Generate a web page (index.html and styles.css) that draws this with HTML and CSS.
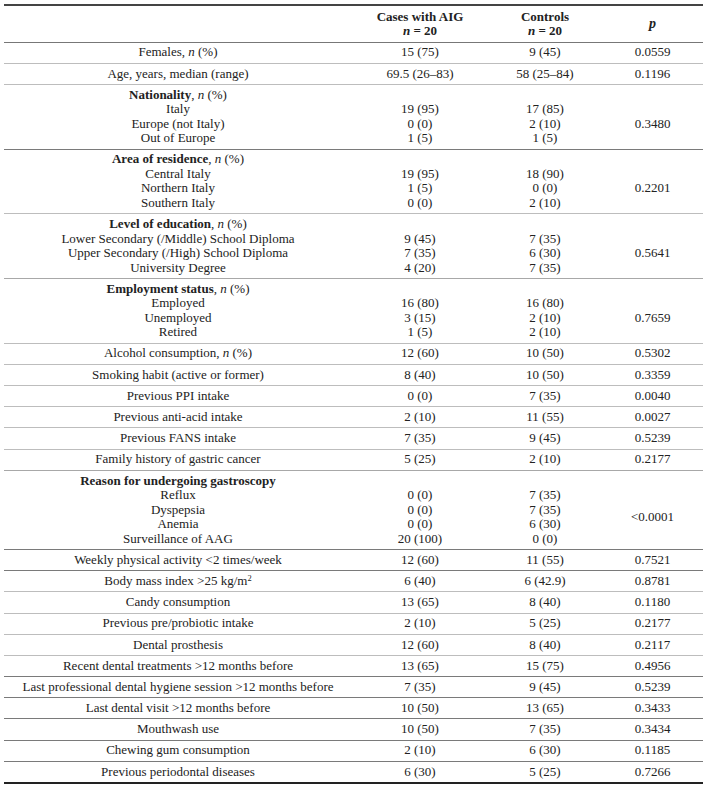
FILE: index.html
```html
<!DOCTYPE html>
<html>
<head>
<meta charset="utf-8">
<link rel="stylesheet" href="styles.css">
</head>
<body>
<table class="tbl">
  <colgroup>
    <col class="c1"><col class="c2"><col class="c3"><col class="c4">
  </colgroup>
  <thead>
    <tr>
      <th></th>
      <th>Cases with AIG<br><i>n</i> = 20</th>
      <th>Controls<br><i>n</i> = 20</th>
      <th><i class="pp">p</i></th>
    </tr>
  </thead>
  <tbody>
    <tr class="lt"><td>Females, <i>n</i> (%)</td><td>15 (75)</td><td>9 (45)</td><td>0.0559</td></tr>
    <tr class="lt"><td>Age, years, median (range)</td><td>69.5 (26–83)</td><td>58 (25–84)</td><td>0.1196</td></tr>
    <tr class="dk grp">
      <td><b>Nationality</b>, <i>n</i> (%)<br>Italy<br>Europe (not Italy)<br>Out of Europe</td>
      <td class="sub">19 (95)<br>0 (0)<br>1 (5)</td>
      <td class="sub">17 (85)<br>2 (10)<br>1 (5)</td>
      <td class="pv">0.3480</td>
    </tr>
    <tr class="lt grp">
      <td><b>Area of residence</b>, <i>n</i> (%)<br>Central Italy<br>Northern Italy<br>Southern Italy</td>
      <td class="sub">19 (95)<br>1 (5)<br>0 (0)</td>
      <td class="sub">18 (90)<br>0 (0)<br>2 (10)</td>
      <td class="pv">0.2201</td>
    </tr>
    <tr class="lt2 grp">
      <td><b>Level of education</b>, <i>n</i> (%)<br>Lower Secondary (/Middle) School Diploma<br>Upper Secondary (/High) School Diploma<br>University Degree</td>
      <td class="sub">9 (45)<br>7 (35)<br>4 (20)</td>
      <td class="sub">7 (35)<br>6 (30)<br>7 (35)</td>
      <td class="pv">0.5641</td>
    </tr>
    <tr class="lt grp">
      <td><b>Employment status</b>, <i>n</i> (%)<br>Employed<br>Unemployed<br>Retired</td>
      <td class="sub">16 (80)<br>3 (15)<br>1 (5)</td>
      <td class="sub">16 (80)<br>2 (10)<br>2 (10)</td>
      <td class="pv">0.7659</td>
    </tr>
    <tr class="lt"><td>Alcohol consumption, <i>n</i> (%)</td><td>12 (60)</td><td>10 (50)</td><td>0.5302</td></tr>
    <tr class="lt"><td>Smoking habit (active or former)</td><td>8 (40)</td><td>10 (50)</td><td>0.3359</td></tr>
    <tr class="lt"><td>Previous PPI intake</td><td>0 (0)</td><td>7 (35)</td><td>0.0040</td></tr>
    <tr class="lt"><td>Previous anti-acid intake</td><td>2 (10)</td><td>11 (55)</td><td>0.0027</td></tr>
    <tr class="lt"><td>Previous FANS intake</td><td>7 (35)</td><td>9 (45)</td><td>0.5239</td></tr>
    <tr class="lt2"><td>Family history of gastric cancer</td><td>5 (25)</td><td>2 (10)</td><td>0.2177</td></tr>
    <tr class="dk grp">
      <td><b>Reason for undergoing gastroscopy</b><br>Reflux<br>Dyspepsia<br>Anemia<br>Surveillance of AAG</td>
      <td class="sub">0 (0)<br>0 (0)<br>0 (0)<br>20 (100)</td>
      <td class="sub">7 (35)<br>7 (35)<br>6 (30)<br>0 (0)</td>
      <td class="pv">&lt;0.0001</td>
    </tr>
    <tr class="dk"><td>Weekly physical activity &lt;2 times/week</td><td>12 (60)</td><td>11 (55)</td><td>0.7521</td></tr>
    <tr class="lt"><td>Body mass index &gt;25 kg/m<sup>2</sup></td><td>6 (40)</td><td>6 (42.9)</td><td>0.8781</td></tr>
    <tr class="lt"><td>Candy consumption</td><td>13 (65)</td><td>8 (40)</td><td>0.1180</td></tr>
    <tr class="lt"><td>Previous pre/probiotic intake</td><td>2 (10)</td><td>5 (25)</td><td>0.2177</td></tr>
    <tr class="lt"><td>Dental prosthesis</td><td>12 (60)</td><td>8 (40)</td><td>0.2117</td></tr>
    <tr class="dk"><td>Recent dental treatments &gt;12 months before</td><td>13 (65)</td><td>15 (75)</td><td>0.4956</td></tr>
    <tr class="dk"><td>Last professional dental hygiene session &gt;12 months before</td><td>7 (35)</td><td>9 (45)</td><td>0.5239</td></tr>
    <tr class="dk"><td>Last dental visit &gt;12 months before</td><td>10 (50)</td><td>13 (65)</td><td>0.3433</td></tr>
    <tr class="dk"><td>Mouthwash use</td><td>10 (50)</td><td>7 (35)</td><td>0.3434</td></tr>
    <tr class="dk"><td>Chewing gum consumption</td><td>2 (10)</td><td>6 (30)</td><td>0.1185</td></tr>
    <tr class="last"><td>Previous periodontal diseases</td><td>6 (30)</td><td>5 (25)</td><td>0.7266</td></tr>
  </tbody>
</table>
</body>
</html>
```

FILE: styles.css
```css
html, body {
  margin: 0;
  padding: 0;
  background: #ffffff;
}

body {
  padding: 4px 4px 0 4px;
  font-family: "Liberation Serif", "Times New Roman", serif;
  font-size: 13px;
  color: #222222;
}

.tbl {
  width: 699px;
  border-collapse: collapse;
  table-layout: fixed;
  border-top: 2px solid #444;
}

.c1 { width: 348px; }
.c2 { width: 136px; }
.c3 { width: 114px; }
.c4 { width: 101px; }

.tbl th {
  font-weight: bold;
  text-align: center;
  vertical-align: middle;
  line-height: 14.5px;
  padding: 3.5px 0 3px;
  border-bottom: 1px solid #777;
}

.tbl th .pp {
  font-size: 14px;
}

.tbl td {
  text-align: center;
  vertical-align: top;
  line-height: 14.5px;
  padding: 2.85px 0;
  white-space: nowrap;
}

.tbl .sub {
  padding-top: 17.35px;
}

.tbl .pv {
  vertical-align: middle;
  padding-top: 17.35px;
}

.lt td { border-bottom: 1px solid #bdbdbd; }
.lt2 td { border-bottom: 1px solid #a8a8a8; }
.dk td { border-bottom: 1px solid #7a7a7a; }
.last td { border-bottom: 2px solid #222; }

sup {
  font-size: 8.5px;
  line-height: 0;
  vertical-align: 4px;
}
```
